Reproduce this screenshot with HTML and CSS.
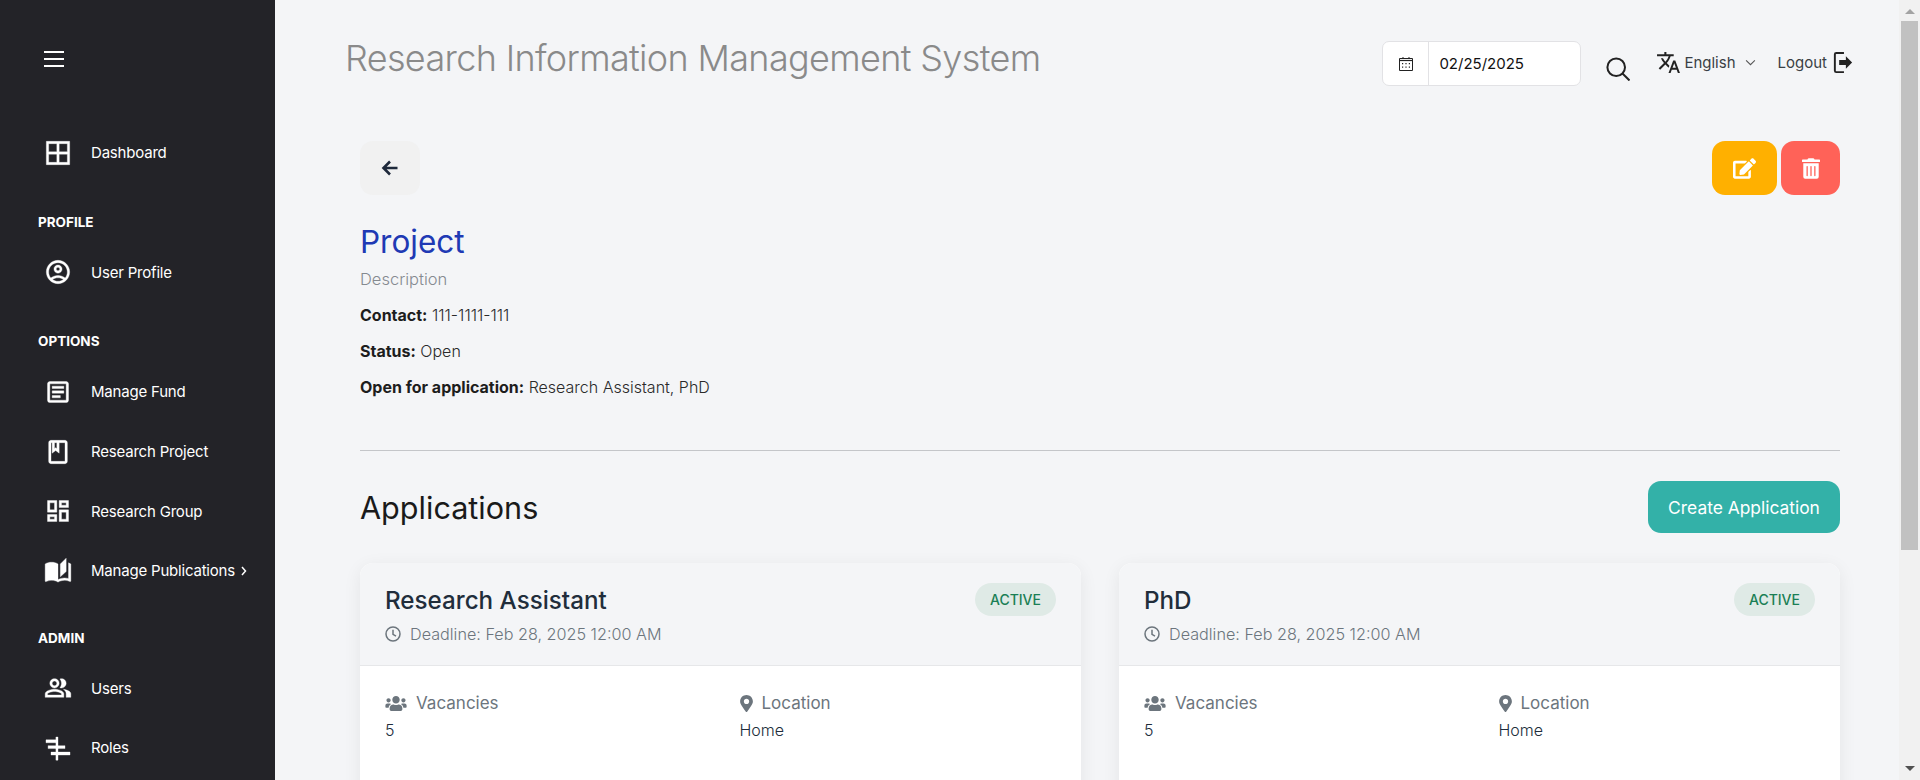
FILE: index.html
```html
<!DOCTYPE html>
<html>
  <head>
    <title>Research Information Management System</title>
    <link rel="stylesheet" href="styles.css">
  </head>
  <body>
    <div class="app">
      <aside class="sidebar">
        <div class="burger"><span></span><span></span><span></span></div>

        <ul class="menu first">
          <li>
            <svg viewBox="0 0 24 24"><path d="M2 2v20h20V2H2zm9 18H4v-7h7v7zm0-9H4V4h7v7zm9 9h-7v-7h7v7zm0-9h-7V4h7v7z"/></svg>
            Dashboard
          </li>
        </ul>

        <h6>PROFILE</h6>
        <ul class="menu">
          <li>
            <svg viewBox="0 0 24 24"><path d="M12 2C6.48 2 2 6.48 2 12s4.48 10 10 10 10-4.48 10-10S17.52 2 12 2zM7.35 18.5C8.66 17.56 10.26 17 12 17s3.34.56 4.65 1.5C15.34 19.44 13.74 20 12 20s-3.34-.56-4.65-1.5zm10.79-1.38C16.45 15.8 14.32 15 12 15s-4.45.8-6.14 2.12C4.7 15.73 4 13.95 4 12c0-4.42 3.58-8 8-8s8 3.58 8 8c0 1.95-.7 3.73-1.86 5.12z"/><path d="M12 6c-1.93 0-3.5 1.57-3.5 3.5S10.07 13 12 13s3.5-1.57 3.5-3.5S13.93 6 12 6zm0 5c-.83 0-1.5-.67-1.5-1.5S11.17 8 12 8s1.5.67 1.5 1.5S12.83 11 12 11z"/></svg>
            User Profile
          </li>
        </ul>

        <h6>OPTIONS</h6>
        <ul class="menu options">
          <li>
            <svg viewBox="0 0 24 24"><path d="M19 5v14H5V5h14m0-2H5c-1.1 0-2 .9-2 2v14c0 1.1.9 2 2 2h14c1.1 0 2-.9 2-2V5c0-1.1-.9-2-2-2z"/><path d="M14 17H7v-2h7v2zm3-4H7v-2h10v2zm0-4H7V7h10v2z"/></svg>
            Manage Fund
          </li>
          <li>
            <svg viewBox="0 0 24 24"><path d="M18 2H6c-1.1 0-2 .9-2 2v16c0 1.1.9 2 2 2h12c1.1 0 2-.9 2-2V4c0-1.1-.9-2-2-2zM9 4h2v5l-1-.75L9 9V4zm9 16H6V4h1v9l3-2.25L13 13V4h5v16z"/></svg>
            Research Project
          </li>
          <li>
            <svg viewBox="0 0 24 24"><path d="M19 5v2h-4V5h4M9 5v6H5V5h4m10 8v6h-4v-6h4M9 17v2H5v-2h4M21 3h-8v6h8V3zM11 3H3v10h8V3zm10 8h-8v10h8V11zm-10 4H3v6h8v-6z"/></svg>
            Research Group
          </li>
          <li>
            <svg viewBox="0 0 24 24"><path d="M19 1l-5 5v11l5-4.5V1zM1 6v14.65c0 .25.25.5.5.5.1 0 .15-.05.25-.05C3.1 20.45 5.05 20 6.5 20c1.95 0 4.05.4 5.5 1.5V6c-1.45-1.1-3.55-1.5-5.5-1.5S2.45 4.9 1 6zm22 13.5V6c-.6-.45-1.25-.8-2-1.05v13.5c-1.1-.35-2.3-.5-3.5-.5-1.7 0-4.15.65-5.5 1.5v2.05c1.35-.85 3.8-1.5 5.5-1.5 1.65 0 3.35.3 4.75 1.05.1.05.15.05.25.05.25 0 .5-.25.5-.5v-1.1z"/></svg>
            Manage Publications
            <svg class="more" viewBox="0 0 8 10"><path d="M2 1l3.5 4L2 9" fill="none" stroke="#fff" stroke-width="1.5"/></svg>
          </li>
        </ul>

        <h6>ADMIN</h6>
        <ul class="menu">
          <li>
            <svg viewBox="0 0 24 24"><path d="M16.67 13.13C18.04 14.06 19 15.32 19 17v3h4v-3c0-2.18-3.57-3.47-6.33-3.87z"/><path d="M15 12c2.21 0 4-1.79 4-4s-1.79-4-4-4c-.47 0-.91.1-1.33.24C14.5 5.27 15 6.58 15 8s-.5 2.73-1.33 3.76c.42.14.86.24 1.33.24z"/><path d="M9 12c2.21 0 4-1.79 4-4s-1.79-4-4-4-4 1.79-4 4 1.79 4 4 4zm0-6c1.1 0 2 .9 2 2s-.9 2-2 2-2-.9-2-2 .9-2 2-2z"/><path d="M9 13c-2.67 0-8 1.34-8 4v3h16v-3c0-2.66-5.33-4-8-4zm6 5H3v-.99C3.2 16.29 6.3 15 9 15s5.8 1.29 6 2z"/></svg>
            Users
          </li>
          <li>
            <svg viewBox="0 0 24 24"><path d="M10.2 2.6H12v19.8h-1.8zM1.7 5h8.5v2.5H1.7zM3.5 10h6.7v2.5H3.5zM12 10h6v2.5h-6zM6 15.5h4.2V18H6zM12 15.5h10.3V18H12z"/></svg>
            Roles
          </li>
        </ul>
      </aside>

      <main class="main">
        <header class="topbar">
          <div class="app-title">Research Information Management System</div>
          <div class="date-box">
            <span class="date-icon">
              <svg viewBox="0 0 16 16" width="16" height="16"><path d="M1.5 2.5h13v12h-13z" fill="none" stroke="#222" stroke-width="1"/><path d="M1.5 4.5h13" stroke="#222" stroke-width="1.2"/><path d="M4.5 1h1v2h-1zM10.5 1h1v2h-1z" fill="#222"/><path d="M4 7h1.2v1.2H4zM7.4 7h1.2v1.2H7.4zM10.8 7H12v1.2h-1.2zM4 10.5h1.2v1.2H4zM7.4 10.5h1.2v1.2H7.4zM10.8 10.5H12v1.2h-1.2z" fill="#222"/></svg>
            </span>
            <span class="date-value">02/25/2025</span>
          </div>
          <svg class="search" viewBox="0 0 24 24" width="24" height="24"><circle cx="10.2" cy="10.2" r="8.8" fill="none" stroke="#222" stroke-width="2"/><path d="M16.5 16.5l7 7" stroke="#222" stroke-width="2"/></svg>
          <div class="lang">
            <svg viewBox="0 0 24 24" width="25" height="25"><path d="M12.87 15.07l-2.54-2.51.03-.03c1.74-1.94 2.98-4.17 3.71-6.53H17V4h-7V2H8v2H1v1.99h11.17C11.5 7.92 10.44 9.75 9 11.35 8.07 10.32 7.3 9.19 6.69 8h-2c.73 1.63 1.73 3.17 2.98 4.56l-5.09 5.02L4 19l5-5 3.11 3.11.76-2.04zM18.5 10h-2L12 22h2l1.12-3h4.75L21 22h2l-4.5-12zm-2.62 7l1.62-4.33L19.12 17h-3.24z" fill="#222"/></svg>
            <span>English</span>
            <svg class="caret" viewBox="0 0 12 8" width="11" height="7"><path d="M1 1.5l5 5 5-5" fill="none" stroke="#555" stroke-width="1.2"/></svg>
          </div>
          <div class="logout">
            <span>Logout</span>
            <svg viewBox="0 0 20 24" width="20" height="23"><path d="M11 2H3a1.5 1.5 0 0 0-1.5 1.5v17A1.5 1.5 0 0 0 3 22h8" fill="none" stroke="#222" stroke-width="2"/><path d="M6 9.5h7V5.5l6.5 6.5-6.5 6.5v-4H6z" fill="#222"/></svg>
          </div>
        </header>

        <div class="content">
          <div class="actions">
            <button class="btn-back">
              <svg viewBox="0 0 20 20" width="20" height="20"><path d="M17.5 10H4M10 3.5L3.5 10l6.5 6.5" fill="none" stroke="#1e293b" stroke-width="2.6"/></svg>
            </button>
            <div class="action-right">
              <button class="btn-edit">
                <svg viewBox="0 0 576 512" width="23" height="21"><path d="M402.6 83.2l90.2 90.2c3.8 3.8 3.8 10 0 13.8L274.4 405.6l-92.8 10.3c-12.4 1.4-22.9-9.1-21.5-21.5l10.3-92.8L388.8 83.2c3.8-3.8 10-3.8 13.8 0zm162-22.9l-48.8-48.8c-15.2-15.2-39.9-15.2-55.2 0l-35.4 35.4c-3.8 3.8-3.8 10 0 13.8l90.2 90.2c3.8 3.8 10 3.8 13.8 0l35.4-35.4c15.2-15.3 15.2-40 0-55.2zM384 346.2V448H64V128h229.8c3.2 0 6.2-1.3 8.5-3.5l40-40c7.6-7.6 2.2-20.5-8.5-20.5H48C21.5 64 0 85.5 0 112v352c0 26.5 21.5 48 48 48h352c26.5 0 48-21.5 48-48V306.2c0-10.7-12.9-16-20.5-8.5l-40 40c-2.2 2.3-3.5 5.3-3.5 8.5z" fill="#fff"/></svg>
              </button>
              <button class="btn-delete">
                <svg viewBox="0 0 448 512" width="18" height="21"><path d="M32 464a48 48 0 0 0 48 48h288a48 48 0 0 0 48-48V128H32zm272-256a16 16 0 0 1 32 0v224a16 16 0 0 1-32 0zm-96 0a16 16 0 0 1 32 0v224a16 16 0 0 1-32 0zm-96 0a16 16 0 0 1 32 0v224a16 16 0 0 1-32 0zM432 32H312l-9.4-18.7A24 24 0 0 0 281.1 0H166.8a23.72 23.72 0 0 0-21.4 13.3L136 32H16A16 16 0 0 0 0 48v32a16 16 0 0 0 16 16h416a16 16 0 0 0 16-16V48a16 16 0 0 0-16-16z" fill="#fff"/></svg>
              </button>
            </div>
          </div>

          <h1 class="project-name">Project</h1>
          <p class="project-desc">Description</p>
          <p class="project-line"><b>Contact:</b> 111-1111-111</p>
          <p class="project-line"><b>Status:</b> Open</p>
          <p class="project-line"><b>Open for application:</b> Research Assistant, PhD</p>

          <hr>

          <div class="apps-head">
            <h2>Applications</h2>
            <button class="btn-create">Create Application</button>
          </div>

          <div class="cards">
            <div class="card">
              <div class="card-head">
                <div>
                  <h3>Research Assistant</h3>
                  <div class="deadline">
                    <svg viewBox="0 0 16 16" width="16" height="16"><circle cx="8" cy="8" r="7" fill="none" stroke="#6c757d" stroke-width="1.5"/><path d="M8 3.8V8.4l3 1.8" fill="none" stroke="#6c757d" stroke-width="1.5"/></svg>
                    Deadline: Feb 28, 2025 12:00 AM
                  </div>
                </div>
                <span class="badge">ACTIVE</span>
              </div>
              <div class="card-body">
                <div>
                  <div class="field-label">
                    <svg viewBox="0 0 640 512" width="22" height="17"><path d="M96 224c35.3 0 64-28.7 64-64s-28.7-64-64-64-64 28.7-64 64 28.7 64 64 64zm448 0c35.3 0 64-28.7 64-64s-28.7-64-64-64-64 28.7-64 64 28.7 64 64 64zm32 32h-64c-17.6 0-33.5 7.1-45.1 18.6 40.3 22.1 68.9 62 75.1 109.4h66c17.7 0 32-14.3 32-32v-32c0-35.3-28.7-64-64-64zm-256 0c61.9 0 112-50.1 112-112S381.9 32 320 32 208 82.1 208 144s50.1 112 112 112zm76.8 32h-8.3c-20.8 10-43.9 16-68.5 16s-47.6-6-68.5-16h-8.3C179.6 288 128 339.6 128 403.2V432c0 26.5 21.5 48 48 48h288c26.5 0 48-21.5 48-48v-28.8c0-63.6-51.6-115.2-115.2-115.2zm-223.7-13.4C161.5 263.1 145.6 256 128 256H64c-35.3 0-64 28.7-64 64v32c0 17.7 14.3 32 32 32h65.9c6.3-47.4 34.9-87.3 75.2-109.4z" fill="#6c757d"/></svg>
                    Vacancies
                  </div>
                  <div class="field-value">5</div>
                </div>
                <div>
                  <div class="field-label">
                    <svg viewBox="0 0 384 512" width="13" height="17"><path d="M172.268 501.67C26.97 291.031 0 255.322 0 192 0 85.961 85.961 0 192 0s192 85.961 192 192c0 63.322-26.97 99.031-172.268 309.67-9.535 13.774-29.93 13.773-39.464 0zM192 272c44.183 0 80-35.817 80-80s-35.817-80-80-80-80 35.817-80 80 35.817 80 80 80z" fill="#6c757d"/></svg>
                    Location
                  </div>
                  <div class="field-value">Home</div>
                </div>
              </div>
            </div>

            <div class="card">
              <div class="card-head">
                <div>
                  <h3>PhD</h3>
                  <div class="deadline">
                    <svg viewBox="0 0 16 16" width="16" height="16"><circle cx="8" cy="8" r="7" fill="none" stroke="#6c757d" stroke-width="1.5"/><path d="M8 3.8V8.4l3 1.8" fill="none" stroke="#6c757d" stroke-width="1.5"/></svg>
                    Deadline: Feb 28, 2025 12:00 AM
                  </div>
                </div>
                <span class="badge">ACTIVE</span>
              </div>
              <div class="card-body">
                <div>
                  <div class="field-label">
                    <svg viewBox="0 0 640 512" width="22" height="17"><path d="M96 224c35.3 0 64-28.7 64-64s-28.7-64-64-64-64 28.7-64 64 28.7 64 64 64zm448 0c35.3 0 64-28.7 64-64s-28.7-64-64-64-64 28.7-64 64 28.7 64 64 64zm32 32h-64c-17.6 0-33.5 7.1-45.1 18.6 40.3 22.1 68.9 62 75.1 109.4h66c17.7 0 32-14.3 32-32v-32c0-35.3-28.7-64-64-64zm-256 0c61.9 0 112-50.1 112-112S381.9 32 320 32 208 82.1 208 144s50.1 112 112 112zm76.8 32h-8.3c-20.8 10-43.9 16-68.5 16s-47.6-6-68.5-16h-8.3C179.6 288 128 339.6 128 403.2V432c0 26.5 21.5 48 48 48h288c26.5 0 48-21.5 48-48v-28.8c0-63.6-51.6-115.2-115.2-115.2zm-223.7-13.4C161.5 263.1 145.6 256 128 256H64c-35.3 0-64 28.7-64 64v32c0 17.7 14.3 32 32 32h65.9c6.3-47.4 34.9-87.3 75.2-109.4z" fill="#6c757d"/></svg>
                    Vacancies
                  </div>
                  <div class="field-value">5</div>
                </div>
                <div>
                  <div class="field-label">
                    <svg viewBox="0 0 384 512" width="13" height="17"><path d="M172.268 501.67C26.97 291.031 0 255.322 0 192 0 85.961 85.961 0 192 0s192 85.961 192 192c0 63.322-26.97 99.031-172.268 309.67-9.535 13.774-29.93 13.773-39.464 0zM192 272c44.183 0 80-35.817 80-80s-35.817-80-80-80-80 35.817-80 80 35.817 80 80 80z" fill="#6c757d"/></svg>
                    Location
                  </div>
                  <div class="field-value">Home</div>
                </div>
              </div>
            </div>
          </div>
        </div>
      </main>

      <div class="scrollbar">
        <span class="arrow-up"></span>
        <div class="thumb"></div>
        <span class="arrow-down"></span>
      </div>
    </div>
  </body>
</html>
```

FILE: styles.css
```css
* {
  box-sizing: border-box;
}
html, body {
  margin: 0;
  height: 100%;
  overflow: hidden;
}
body {
  font-family: Inter, "Liberation Sans", sans-serif;
  color: #212529;
  background: #f4f5f7;
}
.app {
  display: flex;
  height: 780px;
  overflow: hidden;
}

/* sidebar */
.sidebar {
  width: 275px;
  flex-shrink: 0;
  background: #232328;
  color: #fff;
  padding: 51px 0 0 38px;
  overflow: hidden;
}
.burger {
  width: 20px;
  margin-left: 6px;
  display: flex;
  flex-direction: column;
  gap: 5px;
}
.burger span {
  display: block;
  height: 2px;
  background: #fff;
}
.sidebar h6 {
  margin: 0 0 11px;
  font-size: 13.5px;
  line-height: 20px;
  font-weight: 700;
}
.menu {
  list-style: none;
  margin: 0 0 29px;
  padding: 0;
}
.menu.first {
  margin-top: 56px;
  margin-bottom: 29px;
}
.menu.options {
  margin-bottom: 27px;
}
.menu li {
  display: flex;
  align-items: center;
  height: 59.6px;
  font-size: 15px;
  letter-spacing: -0.2px;
}
.menu li > svg {
  width: 28px;
  height: 28px;
  margin: 0 19px 0 6px;
  fill: #fff;
  stroke: #fff;
  stroke-width: 0.3;
  flex-shrink: 0;
}
.menu li > svg.more {
  width: 8px;
  height: 10px;
  margin: 0 0 0 5px;
  fill: none;
  stroke-width: 1.5;
}

/* main */
.main {
  flex: 1;
  min-width: 0;
}
.topbar {
  display: flex;
  align-items: flex-start;
  height: 141px;
  padding: 41px 46px 0 70px;
}
.app-title {
  flex: 1;
  font-size: 36px;
  font-weight: 300;
  line-height: 34px;
  color: #8a8a8a;
  letter-spacing: -0.66px;
}
.date-box {
  display: flex;
  width: 199px;
  height: 45px;
  background: #fff;
  border: 1px solid #e2e2e5;
  border-radius: 7px;
  font-size: 15px;
  color: #111;
}
.date-icon {
  display: flex;
  align-items: center;
  justify-content: center;
  width: 46px;
  border-right: 1px solid #e2e2e5;
}
.date-value {
  display: flex;
  align-items: center;
  padding-left: 10px;
}
.search {
  margin: 16px 0 0 25px;
}
.lang {
  display: flex;
  align-items: center;
  gap: 3px;
  margin: 9px 0 0 26px;
  font-size: 15px;
  color: #3a3f45;
}
.caret {
  margin-left: 6px;
}
.logout {
  display: flex;
  align-items: center;
  gap: 6px;
  margin: 10px 0 0 22px;
  font-size: 15px;
  color: #3a3f45;
}
.content {
  padding: 0 59px 0 85px;
}
.actions {
  display: flex;
  justify-content: space-between;
}
button {
  border: none;
  height: 54px;
  border-radius: 13px;
  font-family: inherit;
  display: flex;
  align-items: center;
  justify-content: center;
}
.btn-back {
  width: 60px;
  background: #f1f1f1;
}
.action-right {
  display: flex;
  gap: 4px;
}
.btn-edit {
  width: 65px;
  background: #ffb000;
}
.btn-delete {
  width: 59px;
  background: #ff6258;
}
.project-name {
  margin: 27px 0 0;
  font-size: 31.5px;
  line-height: 40px;
  font-weight: 400;
  color: #2039b4;
}
.project-desc {
  margin: 5px 0 0;
  font-size: 16.5px;
  line-height: 24px;
  font-weight: 300;
  color: #858a90;
}
.project-line {
  margin: 12px 0 0;
  font-size: 16px;
  line-height: 24px;
  font-weight: 300;
  color: #2a2a2a;
}
.project-line b {
  font-weight: 700;
  color: #1d1d1d;
}
hr {
  margin: 51px 0 30px;
  border: none;
  border-top: 1px solid #c4c6c9;
}
.apps-head {
  display: flex;
  justify-content: space-between;
  align-items: center;
  height: 52px;
  margin-bottom: 30px;
}
.apps-head h2 {
  margin: 1px 0 0;
  font-size: 30.6px;
  font-weight: 400;
  color: #1a1a1a;
}
.btn-create {
  width: 192px;
  height: 52px;
  background: #33b1a8;
  color: #fff;
  font-size: 17.4px;
  font-weight: 400;
}

/* cards */
.cards {
  display: grid;
  grid-template-columns: 721px 721px;
  gap: 38px;
}
.card {
  height: 300px;
  background: #fff;
  border-radius: 13px 13px 0 0;
  box-shadow: 0 4px 18px rgba(0, 0, 0, 0.07);
}
.card-head {
  display: flex;
  justify-content: space-between;
  align-items: flex-start;
  height: 103px;
  padding: 20px 25px 0;
  background: #f4f5f7;
  border-radius: 13px 13px 0 0;
  border-bottom: 1px solid #e6e7e9;
}
.card-head h3 {
  margin: 2px 0 0;
  font-size: 24.2px;
  line-height: 32px;
  font-weight: 500;
  color: #212d3b;
}
.deadline {
  display: flex;
  align-items: center;
  gap: 9px;
  margin-top: 5px;
  font-size: 16.2px;
  line-height: 24px;
  font-weight: 300;
  color: #6c757d;
}
.badge {
  display: flex;
  align-items: center;
  justify-content: center;
  width: 81px;
  height: 33px;
  border-radius: 17px;
  background: #dfeae6;
  color: #1a7f55;
  font-size: 14px;
  font-weight: 500;
}
.card-body {
  display: grid;
  grid-template-columns: 316.5px 316.5px;
  gap: 38px;
  padding: 25px 25px 0;
}
.field-label {
  display: flex;
  align-items: center;
  gap: 9px;
  font-size: 17px;
  line-height: 24px;
  color: #6c757d;
}
.field-value {
  margin-top: 3px;
  font-size: 16px;
  line-height: 24px;
  font-weight: 300;
  color: #212d3b;
}

/* scrollbar */
.scrollbar {
  position: relative;
  width: 21px;
  flex-shrink: 0;
  background: #f1f1f1;
  padding: 21px 2px 0;
}
.thumb {
  height: 529px;
  background: #c1c1c1;
}
.arrow-up, .arrow-down {
  position: absolute;
  left: 6px;
  width: 0;
  height: 0;
  border-left: 5px solid transparent;
  border-right: 5px solid transparent;
}
.arrow-up {
  top: 9px;
  border-bottom: 5px solid #a3a3a3;
}
.arrow-down {
  bottom: 9px;
  border-top: 5px solid #505050;
}
```
